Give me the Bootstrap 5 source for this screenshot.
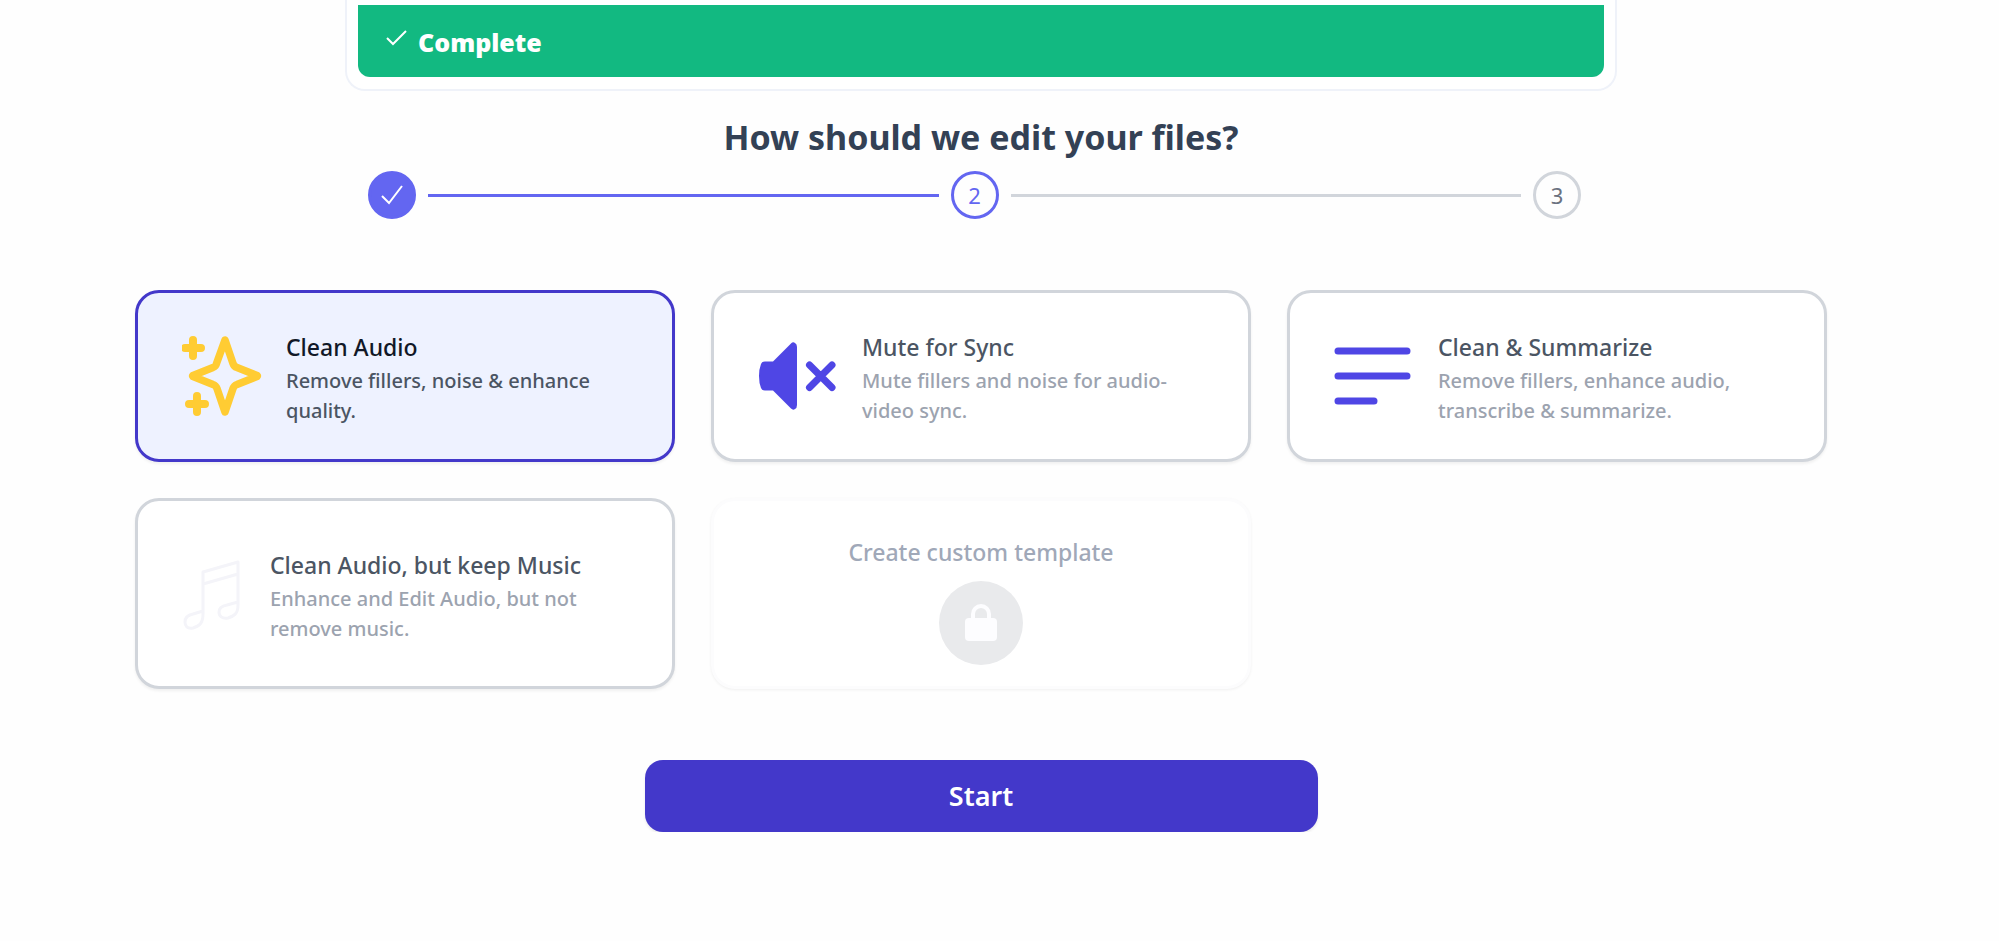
<!DOCTYPE html>
<html lang="en">
<head>
<meta charset="utf-8">
<meta name="viewport" content="width=device-width, initial-scale=1">
<title>Edit your files</title>
<link href="https://cdn.jsdelivr.net/npm/bootstrap@5.3.0/dist/css/bootstrap.min.css" rel="stylesheet">
<style>
  body { font-family: "Noto Sans", "Open Sans", sans-serif; background: #fefefe; padding-right: 37px; }
  .upload-panel, .stepper { max-width: 1272px; }
  .upload-panel { padding: 5px 11px 12px; border: 2px solid #eff2f9; border-top: 0; border-radius: 0 0 20px 20px; background: #fff; }
  .status-bar { background: #12b981; border-radius: 0 0 12px 12px; height: 72px; padding: 2px 28px 0; gap: 11px; font-size: 25px; line-height: 36px; font-weight: 900; }
  .page-title { font-size: 34px; line-height: 40px; font-weight: 700; color: #334155; margin: 26px 0 14px; }
  .stepper { padding: 0 36px 0 23px; gap: 12px; }
  .step-dot { width: 48px; height: 48px; border: 3px solid #d1d5db; font-size: 22px; color: #6b7280; }
  .step-dot.done { background: #6366f1; border-color: #6366f1; color: #fff; }
  .step-dot.current { border-color: #6366f1; color: #6366f1; }
  .step-line { height: 3px; background: #d1d5db; }
  .step-line.done { background: #6366f1; }
  .choices { max-width: 1692px; margin-top: 71px; }
  .choices > .row { --bs-gutter-x: 36px; --bs-gutter-y: 36px; }
  .choice { min-height: 172px; padding: 24px 44px; gap: 24px; border: 3px solid #d1d5db; border-radius: 24px; background: #fff; box-shadow: 0 2px 3px rgba(0,0,0,.06); color: #4b5563; }
  .choice svg { flex: none; }
  .choice-label { padding-top: 5px; }
  .choice-title { font-size: 23px; line-height: 32px; font-weight: 500; }
  .choice-text { font-size: 20px; line-height: 30px; font-weight: 500; margin-top: 3px; color: #9ca3af; }
  .choice.selected { background: #eef2ff; border-color: #4338ca; color: #111827; }
  .choice.selected .choice-text { color: #4b5563; }
  .choice.locked { border-color: #fcfcfd; color: #a0a8b8; gap: 13px; padding: 35px 24px 21px; box-shadow: 0 1px 3px rgba(0,0,0,.06); }
  .lock-disc { width: 84px; height: 84px; background: #e9eaec; }
  .start-btn, .start-btn:hover { max-width: 673px; height: 72px; margin-top: 71px; border: 0; border-radius: 18px; background: #4338ca; color: #fff; font-size: 27px; font-weight: 600; box-shadow: 0 2px 3px rgba(0,0,0,.08); }
</style>
</head>
<body>
<main>
  <section class="upload-panel mx-auto">
    <div class="status-bar d-flex align-items-center text-white">
      <svg width="21" height="16" viewBox="0 0 21 16" class="mb-2" fill="none" stroke="currentColor" stroke-width="2" aria-hidden="true"><path d="M1 8l6 6L20 1"/></svg>
      <span>Complete</span>
    </div>
  </section>

  <h1 class="page-title text-center">How should we edit your files?</h1>

  <div class="stepper d-flex align-items-center mx-auto">
    <div class="step-dot done rounded-circle d-flex align-items-center justify-content-center flex-shrink-0">
      <svg width="22" height="20" viewBox="0 0 22 20" fill="none" stroke="currentColor" stroke-width="2" role="img" aria-label="Step 1 done"><path d="M1 11l7 7L21 1"/></svg>
    </div>
    <div class="step-line done flex-fill"></div>
    <div class="step-dot current rounded-circle d-flex align-items-center justify-content-center flex-shrink-0">2</div>
    <div class="step-line flex-fill"></div>
    <div class="step-dot rounded-circle d-flex align-items-center justify-content-center flex-shrink-0">3</div>
  </div>

  <div class="choices mx-auto">
    <div class="row row-cols-1 row-cols-md-2 row-cols-xl-3">
      <div class="col">
        <button type="button" class="choice selected w-100 h-100 d-flex align-items-center text-start" aria-pressed="true">
          <svg width="80" height="80" viewBox="0 0 80 80" fill="none" stroke="#ffcc33" stroke-linecap="round" stroke-linejoin="round" aria-hidden="true">
            <path stroke-width="7.500" d="M43 4L34.500 27.500Q34 30.500 31 31.500L11 39.500Q10.500 40 11 40.500L31 48.500Q34 49.500 35 52.500L43 76L51 52.500Q52 49.500 55 48.500L75 40.500Q75.500 40 75 39.500L55 31.500Q52 30.500 51 27.500z"/>
            <path stroke-width="8" d="M11 4v16M3 12h16M15 60v16M7 68h16"/>
          </svg>
          <span class="choice-label">
            <span class="choice-title d-block">Clean Audio</span>
            <span class="choice-text d-block">Remove fillers, noise &amp; enhance quality.</span>
          </span>
        </button>
      </div>
      <div class="col">
        <button type="button" class="choice w-100 h-100 d-flex align-items-center text-start" aria-pressed="false">
          <svg width="80" height="80" viewBox="0 0 80 80" aria-hidden="true">
            <path fill="#4f46e5" d="M15 25.500L33 7.500Q35 5.500 37 7Q39 8 39 11V69Q39 72 37 73Q35 74.500 33 72.500L15 54.500H7Q4 54.500 3 52Q1 47 1 40T3 28Q4 25.500 7 25.500z"/>
            <path fill="none" stroke="#4f46e5" stroke-width="7" stroke-linecap="round" d="M51.500 29L74 51.500M74 29L51.500 51.500"/>
          </svg>
          <span class="choice-label">
            <span class="choice-title d-block">Mute for Sync</span>
            <span class="choice-text d-block">Mute fillers and noise for audio-video sync.</span>
          </span>
        </button>
      </div>
      <div class="col">
        <button type="button" class="choice w-100 h-100 d-flex align-items-center text-start" aria-pressed="false">
          <svg width="80" height="80" viewBox="0 0 80 80" fill="none" stroke="#4f46e5" stroke-width="7" stroke-linecap="round" aria-hidden="true"><path d="M4 15h69M4 40h69M4 65h36"/></svg>
          <span class="choice-label">
            <span class="choice-title d-block">Clean &amp; Summarize</span>
            <span class="choice-text d-block">Remove fillers, enhance audio, transcribe &amp; summarize.</span>
          </span>
        </button>
      </div>
      <div class="col">
        <button type="button" class="choice w-100 h-100 d-flex align-items-center text-start" aria-pressed="false">
          <svg width="64" height="72" viewBox="0 0 64 72" fill="none" stroke="#f4f4f9" stroke-width="3" stroke-linejoin="round" aria-hidden="true"><path d="M21 26L56 16M21 56V14L56 4V47M21 56C21 66 17 68 11 70C5 71 3 68 3 64C3 59 6 57 11 56L21 53M56 47C56 56 52 58 46 60C40 61 37 58 37 54C37 50 40 48 45 47L56 44"/></svg>
          <span class="choice-label">
            <span class="choice-title d-block">Clean Audio, but keep Music</span>
            <span class="choice-text d-block">Enhance and Edit Audio, but not remove music.</span>
          </span>
        </button>
      </div>
      <div class="col">
        <button type="button" class="choice locked w-100 h-100 d-flex flex-column align-items-center" aria-disabled="true">
          <span class="choice-title">Create custom template</span>
          <span class="lock-disc rounded-circle d-flex align-items-center justify-content-center">
            <svg width="32" height="38" viewBox="0 0 32 38" aria-hidden="true"><rect y="14" width="32" height="23" rx="4" fill="#fdfdff"/><path d="M8 17V10a8 8 0 0 1 16 0v7" fill="none" stroke="#fdfdff" stroke-width="4"/></svg>
          </span>
        </button>
      </div>
    </div>
  </div>

  <button type="button" class="start-btn btn d-block w-100 mx-auto">Start</button>
</main>
<script src="https://cdn.jsdelivr.net/npm/bootstrap@5.3.0/dist/js/bootstrap.bundle.min.js"></script>
</body>
</html>
